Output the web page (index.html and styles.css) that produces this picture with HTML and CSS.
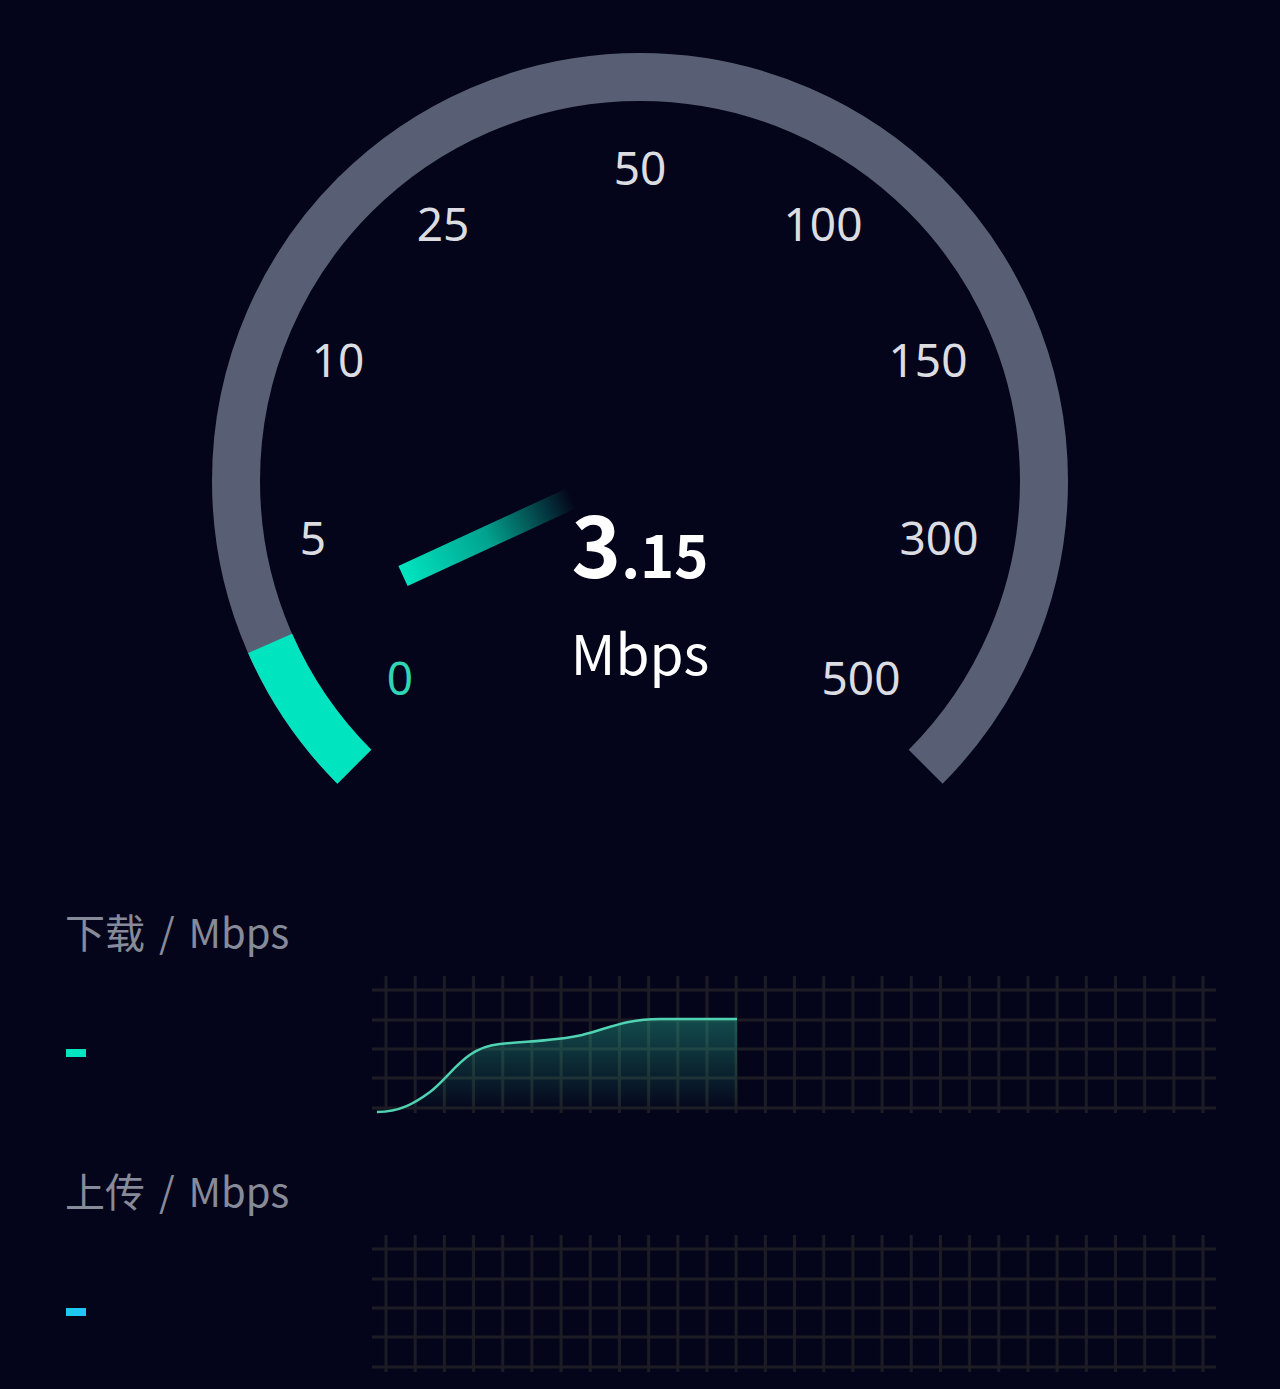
FILE: index.html
```html
<!DOCTYPE html>
<html lang="zh-CN">
<head>
  <meta charset="UTF-8">
  <title>测速</title>
  <link rel="stylesheet" href="styles.css">
</head>
<body>
  <main class="page">
    <!-- 仪表盘 -->
    <section class="dial">
      <svg class="dial-svg" width="1280" height="903" viewBox="0 0 1280 903">
        <defs>
          <linearGradient id="needle-fade" gradientUnits="userSpaceOnUse" x1="403" y1="576" x2="572" y2="498">
            <stop offset="0" stop-color="#00e5c0"/>
            <stop offset="0.5" stop-color="#00e5c0" stop-opacity="0.7"/>
            <stop offset="1" stop-color="#00e5c0" stop-opacity="0"/>
          </linearGradient>
        </defs>
        <path class="dial-track" d="M354.33 766.67 A404 404 0 1 1 925.67 766.67"/>
        <path class="dial-progress" d="M354.33 766.67 A404 404 0 0 1 270.1 643.4"/>
        <polygon points="398.4,566 567.4,488 576.6,508 407.6,586" fill="url(#needle-fade)"/>

        <text class="tick tick-active" x="400" y="695">0</text>
        <text class="tick" x="313" y="555">5</text>
        <text class="tick" x="338" y="377">10</text>
        <text class="tick" x="443" y="241">25</text>
        <text class="tick" x="640" y="185">50</text>
        <text class="tick" x="823" y="241">100</text>
        <text class="tick" x="928" y="377">150</text>
        <text class="tick" x="939" y="555">300</text>
        <text class="tick" x="861" y="695">500</text>

        <text class="reading" x="640" y="578"><tspan class="reading-int">3</tspan><tspan class="reading-dec">.15</tspan></text>
        <text class="reading-unit" x="640" y="675">Mbps</text>
      </svg>
    </section>

    <!-- 下载曲线 -->
    <section class="trend">
      <h2 class="trend-title">下载 / Mbps</h2>
      <div class="trend-row">
        <span class="legend legend-down"></span>
        <svg class="trend-chart" width="848" height="140" viewBox="0 0 848 140">
          <defs>
            <pattern id="cols-down" width="29.18" height="140" patternUnits="userSpaceOnUse">
              <rect x="14.5" y="0" width="3" height="140" fill="#1c1c25"/>
            </pattern>
            <linearGradient id="area-down" x1="0" y1="0" x2="0" y2="1">
              <stop offset="0" stop-color="#2bbf9f" stop-opacity="0.38"/>
              <stop offset="1" stop-color="#2bbf9f" stop-opacity="0"/>
            </linearGradient>
          </defs>
          <rect x="0" y="1" width="836" height="137" fill="url(#cols-down)"/>
          <g class="rows">
            <rect x="2" y="13.5" width="844" height="3"/>
            <rect x="2" y="43.5" width="844" height="3"/>
            <rect x="2" y="72.5" width="844" height="3"/>
            <rect x="2" y="101.5" width="844" height="3"/>
            <rect x="2" y="131.5" width="844" height="3"/>
          </g>
          <path d="M7 137 C30 137 45 128 60 117 C82 100 95 72 130 69 C160 66 185 66 212 60 C240 53 255 44 290 44 L367 44 L367 134 L7 134 Z" fill="url(#area-down)"/>
          <path class="curve-down" d="M7 137 C30 137 45 128 60 117 C82 100 95 72 130 69 C160 66 185 66 212 60 C240 53 255 44 290 44 L367 44"/>
        </svg>
      </div>
    </section>

    <!-- 上传曲线 -->
    <section class="trend">
      <h2 class="trend-title">上传 / Mbps</h2>
      <div class="trend-row">
        <span class="legend legend-up"></span>
        <svg class="trend-chart" width="848" height="140" viewBox="0 0 848 140">
          <defs>
            <pattern id="cols-up" width="29.18" height="140" patternUnits="userSpaceOnUse">
              <rect x="14.5" y="0" width="3" height="140" fill="#1c1c25"/>
            </pattern>
          </defs>
          <rect x="0" y="1" width="836" height="137" fill="url(#cols-up)"/>
          <g class="rows">
            <rect x="2" y="13.5" width="844" height="3"/>
            <rect x="2" y="43.5" width="844" height="3"/>
            <rect x="2" y="72.5" width="844" height="3"/>
            <rect x="2" y="101.5" width="844" height="3"/>
            <rect x="2" y="131.5" width="844" height="3"/>
          </g>
        </svg>
      </div>
    </section>
  </main>
</body>
</html>
```

FILE: styles.css
```css
/* 页面基础 */
html, body {
  margin: 0;
  background-color: #04051a;
}
.page {
  width: 1280px;
  min-height: 1389px;
  font-family: "Noto Sans CJK SC", "Noto Sans", sans-serif;
}
/* 仪表盘 */
.dial-svg {
  display: block;
}
.dial-track,
.dial-progress {
  fill: none;
  stroke-width: 48;
}
.dial-track {
  stroke: #585f75;
}
.dial-progress {
  stroke: #00e5c0;
}
.tick {
  font-family: "Noto Sans", sans-serif;
  font-size: 46px;
  fill: #dcdde2;
  text-anchor: middle;
}
.tick-active {
  fill: #2fd5b5;
}
.reading {
  font-family: "Noto Sans CJK SC", "Noto Sans", sans-serif;
  font-weight: 700;
  fill: #ffffff;
  text-anchor: middle;
}
.reading-int {
  font-size: 84px;
}
.reading-dec {
  font-size: 58px;
}
.reading-unit {
  font-family: "Noto Sans CJK SC", "Noto Sans", sans-serif;
  font-size: 55px;
  fill: #ffffff;
  text-anchor: middle;
}
/* 曲线区域 */
.trend {
  padding-left: 65px;
  margin-bottom: 47px;
}
.trend-title {
  margin: 0 0 16px;
  font-size: 40px;
  font-weight: 400;
  line-height: 56px;
  word-spacing: 5px;
  color: #868a99;
}
.trend-row {
  display: flex;
  align-items: center;
}
.legend {
  width: 20px;
  height: 8px;
  margin-top: 16px;
  margin-left: 1px;
  margin-right: 284px;
}
.legend-down {
  background-color: #00e5c0;
}
.legend-up {
  background-color: #1ec8f0;
}
.trend-chart {
  display: block;
}
.rows rect {
  fill: #1c1c25;
}
.curve-down {
  fill: none;
  stroke: #4fd3b3;
  stroke-width: 2.5;
}
```
